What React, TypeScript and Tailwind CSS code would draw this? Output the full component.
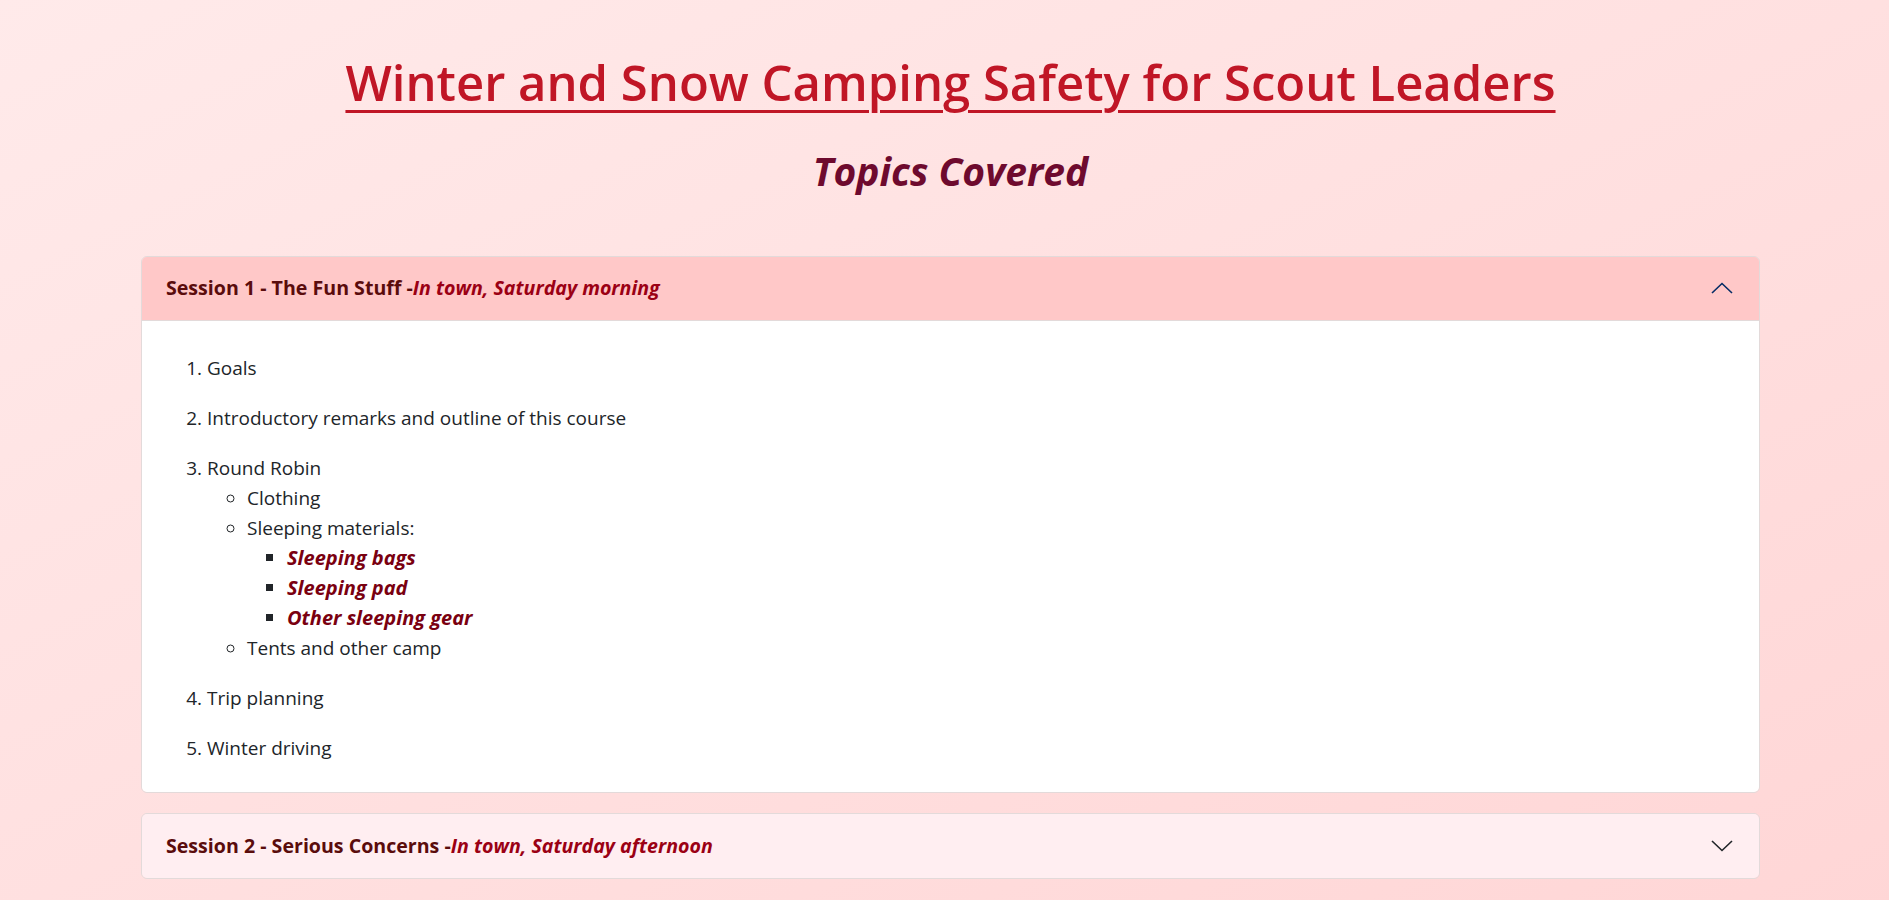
import { useState } from 'react';

type Session = {
  title: string;
  where: string;
};

const sessions: Session[] = [
  { title: 'Session 1 - The Fun Stuff -', where: 'In town, Saturday morning' },
  { title: 'Session 2 - Serious Concerns -', where: 'In town, Saturday afternoon' },
];

function Chevron({ up }: { up: boolean }) {
  return (
    <svg width="22" height="12" viewBox="0 0 22 12" fill="none" className="shrink-0">
      <polyline
        points={up ? '1,11 11,1.5 21,11' : '1,1 11,10.5 21,1'}
        stroke={up ? '#052c65' : '#212529'}
        strokeWidth="1.6"
        strokeLinejoin="miter"
      />
    </svg>
  );
}

function SessionOneBody() {
  return (
    <div className="bg-white pl-[25px] pr-6 pt-8 pb-[29px] text-[19px] leading-[30px] text-[#212529]">
      <ol className="list-decimal pl-10 space-y-5">
        <li>Goals</li>
        <li>Introductory remarks and outline of this course</li>
        <li>
          Round Robin
          <ul className="list-[circle] pl-10">
            <li>Clothing</li>
            <li>
              Sleeping materials:
              <ul className="list-[square] pl-10 marker:text-[#212529]">
                <li className="text-[20px] font-bold italic text-[#7a0010]">Sleeping bags</li>
                <li className="text-[20px] font-bold italic text-[#7a0010]">Sleeping pad</li>
                <li className="text-[20px] font-bold italic text-[#7a0010]">Other sleeping gear</li>
              </ul>
            </li>
            <li>Tents and other camp</li>
          </ul>
        </li>
        <li>Trip planning</li>
        <li>Winter driving</li>
      </ol>
    </div>
  );
}

export default function App() {
  const [open, setOpen] = useState<number | null>(0);

  return (
    <main
      className="min-h-screen bg-gradient-to-br from-[#ffeaea] to-[#ffd6d6] pb-10"
      style={{ fontFamily: '"Open Sans", "Noto Sans", sans-serif' }}
    >
      <div className="ml-[141px] w-[1619px]">
        <h1 className="pt-[53px] text-center text-[49px] leading-[1.2] font-semibold text-[#c01626] underline decoration-[3px] underline-offset-[9px]">
          Winter and Snow Camping Safety for Scout Leaders
        </h1>
        <h2 className="mt-[36px] text-center text-[39px] leading-[1.2] font-bold italic text-[#6e0a2e]">
          Topics Covered
        </h2>

        <div className="mt-[61px] flex flex-col gap-5">
          {sessions.map((s, i) => {
            const isOpen = open === i;
            return (
              <div key={s.title} className="overflow-hidden rounded-md border border-[#e3dada]">
                <button
                  type="button"
                  onClick={() => setOpen(isOpen ? null : i)}
                  className={
                    'flex h-16 w-full items-center justify-between pl-6 pr-[26px] text-left ' +
                    (isOpen ? 'bg-[#ffc8c8] border-b border-[#e3dada]' : 'bg-[#ffeef1]')
                  }
                >
                  <span className="text-[19.6px] font-bold text-[#5a0c0c]">
                    {s.title}
                    <em className="text-[#9b0014]">{s.where}</em>
                  </span>
                  <Chevron up={isOpen} />
                </button>
                {isOpen && i === 0 && <SessionOneBody />}
              </div>
            );
          })}
        </div>
      </div>
    </main>
  );
}
